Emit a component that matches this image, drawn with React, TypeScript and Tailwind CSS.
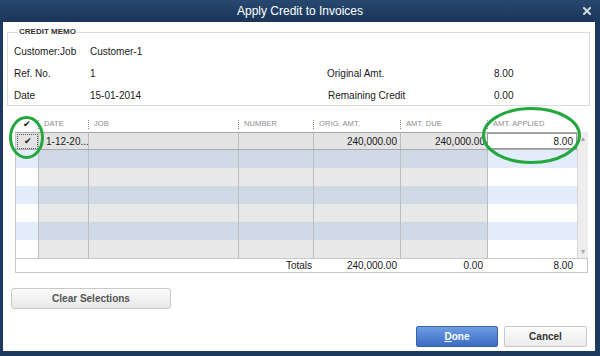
import React from 'react';

const FONT = { fontFamily: '"Liberation Sans", Arial, sans-serif' };

const HeaderCell: React.FC<{ label: string; width: number }> = ({ label, width }) => (
  <div className="flex items-center h-full overflow-hidden" style={{ width }}>
    <span className="h-[9px] border-l border-dotted border-[#8a8a8a]" />
    <span className="ml-[5px] text-[7.5px] text-[#8c8c8c] uppercase whitespace-nowrap tracking-[0.1px]">{label}</span>
  </div>
);

const App: React.FC = () => {
  const rows = Array.from({ length: 7 });

  return (
    <div className="relative w-[600px] h-[356px] bg-[#1d3a5e] flex flex-col overflow-hidden" style={FONT}>
      {/* title bar */}
      <div className="h-[22px] grid grid-cols-[1fr_auto_1fr] items-center bg-linear-to-b from-[#28486f] to-[#1a3659]">
        <div />
        <div className="text-[12px] text-white">Apply Credit to Invoices</div>
        <div className="flex justify-end pr-[9px]">
          <svg width="8" height="8" viewBox="0 0 8 8">
            <path d="M1 1 L7 7 M7 1 L1 7" stroke="#d3d8e0" strokeWidth="2" strokeLinecap="square" />
          </svg>
        </div>
      </div>

      {/* body */}
      <div className="flex-1 ml-[3px] mr-[5px] mb-[5px] bg-white flex flex-col text-[#1a1a1a]">
        <fieldset className="mt-[5px] ml-[4px] mr-[5px] h-[79px] border border-[#dadada] pl-[6px] pt-[3px]">
          <legend className="ml-[4px] px-[1px] text-[8px] leading-[10px] font-bold text-[#333]">CREDIT MEMO</legend>
          <div className="flex flex-col text-[10px]">
            <div className="h-[22px] flex items-center">
              <span className="w-[76px]">Customer:Job</span>
              <span>Customer-1</span>
            </div>
            <div className="h-[22px] flex items-center">
              <span className="w-[76px]">Ref. No.</span>
              <span className="w-[237px]">1</span>
              <span className="w-[167px]">Original Amt.</span>
              <span>8.00</span>
            </div>
            <div className="h-[22px] flex items-center">
              <span className="w-[76px]">Date</span>
              <span className="w-[237px]">15-01-2014</span>
              <span className="w-[167px] pl-[1px]">Remaining Credit</span>
              <span>0.00</span>
            </div>
          </div>
        </fieldset>

        {/* grid */}
        <div className="mt-[10px] ml-[12px] w-[573px] flex flex-col text-[10px]">
          <div className="h-[16px] flex">
            <div className="w-[23px] flex items-center justify-center pl-[1px] text-[9px] leading-none">✔</div>
            <HeaderCell label="Date" width={50} />
            <HeaderCell label="Job" width={150} />
            <HeaderCell label="Number" width={75} />
            <HeaderCell label="Orig. Amt." width={87} />
            <HeaderCell label="Amt. Due" width={87} />
            <HeaderCell label="Amt. Applied" width={90} />
            <div className="w-[11px]" />
          </div>

          <div className="flex">
            <div className="w-[562px] flex flex-col">
              {rows.map((_, i) => {
                const sel = i === 0;
                const blue = i % 2 === 1;
                const side = sel ? 'bg-[#e3e3e3]' : blue ? 'bg-[#e2ecfa]' : 'bg-white';
                const mid = sel ? 'bg-[#e3e3e3]' : blue ? 'bg-[#cfd9e6]' : 'bg-[#e8e8e8]';
                return (
                  <div
                    key={i}
                    className={`h-[18px] flex ${sel ? 'border-y border-[#a9a9a9]' : ''}`}
                  >
                    <div className={`w-[23px] border-l border-[#c4c4c4] flex items-center pl-[1px] ${side}`}>
                      {sel && (
                        <div className="w-[21px] h-[15px] border border-dotted border-[#555] flex items-center justify-center text-[9px] leading-none">
                          ✔
                        </div>
                      )}
                    </div>
                    <div className={`w-[50px] border-l border-[#bdbdbd] flex items-center pl-[7px] overflow-hidden whitespace-nowrap ${mid}`}>
                      {sel && '1-12-20...'}
                    </div>
                    <div className={`w-[150px] border-l border-[#bdbdbd] ${mid}`} />
                    <div className={`w-[75px] border-l border-[#bdbdbd] ${mid}`} />
                    <div className={`w-[87px] border-l border-[#bdbdbd] flex items-center justify-end pr-[3px] ${mid}`}>
                      {sel && '240,000.00'}
                    </div>
                    <div className={`w-[87px] border-l border-[#bdbdbd] flex items-center justify-end pr-[2px] ${mid}`}>
                      {sel && '240,000.00'}
                    </div>
                    {sel ? (
                      <div className="w-[90px] bg-white border border-[#9a9a9a] flex items-center justify-end pr-[3px]">8.00</div>
                    ) : (
                      <div className={`w-[90px] border-l border-[#bdbdbd] ${side}`} />
                    )}
                  </div>
                );
              })}
            </div>
            <div className="w-[11px] h-[126px] bg-[#ededed] border-l border-[#d6d6d6] flex flex-col items-center justify-between py-[3px] text-[7px] leading-none text-[#a8a8a8]">
              <span>▲</span>
              <span>▼</span>
            </div>
          </div>

          <div className="h-[15px] flex border border-[#c8c8c8] bg-white items-center">
            <div className="w-[297px] text-right pr-[1px]">Totals</div>
            <div className="w-[87px] text-right pr-[3px]">240,000.00</div>
            <div className="w-[87px] text-right pr-[4px]">0.00</div>
            <div className="w-[90px] text-right pr-[4px]">8.00</div>
            <div className="w-[10px]" />
          </div>
        </div>

        <div className="mt-[12px] ml-[8px]">
          <button className="w-[160px] h-[21px] rounded-[3px] border border-[#c8c8c8] bg-linear-to-b from-[#fbfbfb] to-[#e8e8e8] text-[10px] font-bold text-[#555]">
            Clear Selections
          </button>
        </div>

        <div className="mt-[17px] mr-[8px] flex justify-end gap-[6px]">
          <button className="w-[82px] h-[21px] rounded-[2px] border border-[#3a63ab] bg-linear-to-b from-[#6d9de2] to-[#3c6cc5] text-[10px] font-bold text-white">
            <span className="underline">D</span>one
          </button>
          <button className="w-[83px] h-[21px] rounded-[2px] border border-[#c8c8c8] bg-linear-to-b from-[#fcfcfc] to-[#ebebeb] text-[10px] font-bold text-[#333]">
            Cancel
          </button>
        </div>
      </div>

      {/* green annotation circles */}
      <svg className="absolute inset-0 pointer-events-none" width="600" height="356">
        <ellipse cx="26.5" cy="137.5" rx="16" ry="20" fill="none" stroke="#22a83c" strokeWidth="3" />
        <ellipse cx="531.5" cy="135.5" rx="48" ry="27" fill="none" stroke="#22a83c" strokeWidth="3" />
      </svg>
    </div>
  );
};

export default App;
